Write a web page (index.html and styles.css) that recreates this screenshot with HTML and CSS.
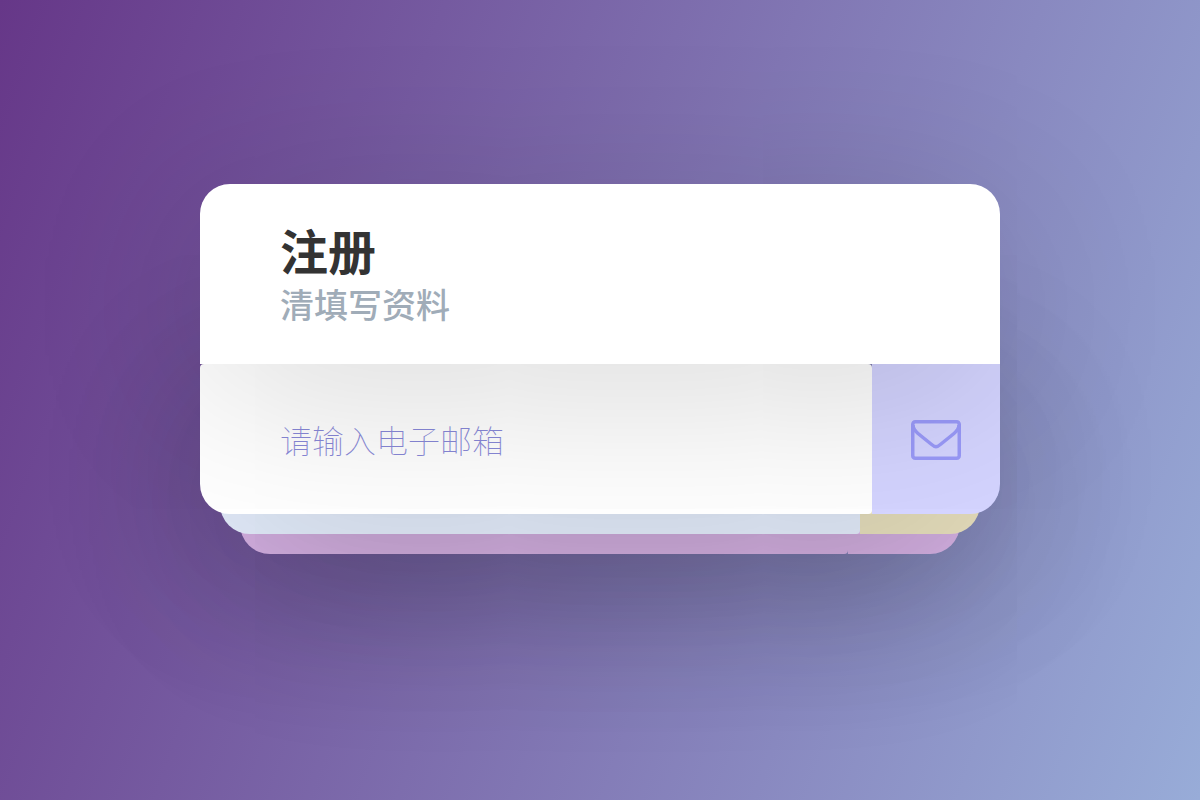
FILE: index.html
```
<!DOCTYPE html>
<html lang="zh-CN">
<head>
  <meta charset="UTF-8">
  <meta name="viewport" content="width=device-width, initial-scale=1.0">
  <title>注册</title>
  <link rel="stylesheet" href="styles.css">
</head>
<body>
  <form class="registration">
    <header>
      <h1>注册</h1>
      <p>清填写资料</p>
    </header>
    <div class="steps">
      <div class="step step-email">
        <input type="email" placeholder="请输入电子邮箱" aria-label="请输入电子邮箱">
        <button type="button" aria-label="下一步">
          <svg class="icon" viewBox="0 0 50 40" fill="none" stroke="currentColor" stroke-width="3.500">
            <rect x="1.750" y="1.750" width="46.500" height="36.500" rx="2.500"/>
            <path d="M2 5C2 9 4 11 7 13.500L20 24C24 27.500 26 27.500 30 24L43 13.500C46 11 48 9 48 5"/>
          </svg>
        </button>
      </div>
      <div class="step step-password">
        <input type="password" aria-label="密码" tabindex="-1">
        <button type="button" aria-label="下一步" tabindex="-1"></button>
      </div>
      <div class="step step-repeat">
        <input type="password" aria-label="重复密码" tabindex="-1">
        <button type="button" aria-label="完成" tabindex="-1"></button>
      </div>
    </div>
  </form>
</body>
</html>
```
FILE: styles.css
```
* { box-sizing: border-box; margin: 0; padding: 0; }
body {
  font-family: "Noto Sans CJK SC", sans-serif;
  background: linear-gradient(110deg, #663788, #98acd8);
  min-height: 100vh;
  padding: 23vh 20px 40px;
  overflow-x: hidden;
}
.registration {
  max-width: 800px;
  margin: 0 auto;
}

header {
  position: relative;
  z-index: 4;
  background: #fff;
  padding: 36px 80px 38px;
  border-radius: 30px 30px 0 0;
  box-shadow: 0 30px 180px rgba(0,0,0,0.16);
}
h1 {
  font-size: 48px;
  line-height: 58px;
  font-weight: 700;
  color: #333;
}
header p {
  margin-top: 4px;
  font-size: 34px;
  line-height: 44px;
  font-weight: 500;
  color: #a0acb8;
}

/* all steps share one cell, the next ones peek out below */
.steps { display: grid; }
.step {
  grid-area: 1 / 1;
  align-self: start;
  position: relative;
  display: flex;
  height: 150px;
  border-radius: 0 0 30px 30px;
  box-shadow: 0 30px 180px rgba(0,0,0,0.16);
}
.step input {
  width: calc(80% + 32px);
  padding: 0 80px;
  border: none;
  outline: none;
  border-radius: 4px 4px 4px 30px;
  background: #fff;
  font-family: inherit;
  font-size: 32px;
  font-weight: 100;
  color: #8888d8;
}
.step input::placeholder { color: #8888d8; opacity: 1; }
.step button {
  flex: 1;
  display: flex;
  align-items: center;
  justify-content: center;
  padding-top: 2px;
  border: none;
  border-radius: 0 0 30px 0;
  background: #d4d4ff;
  color: #9999f8;
  cursor: pointer;
}
.icon { width: 50px; height: 40px; }

.step-email { z-index: 3; }
.step-password { z-index: 2; margin: 20px 20px 0; }
.step-password input { background: #e5eefd; }
.step-password button { background: #e8e0be; }
.step-repeat { z-index: 1; margin: 40px 40px 0; }
.step-repeat input,
.step-repeat button { background: #deb8ec; }
```
